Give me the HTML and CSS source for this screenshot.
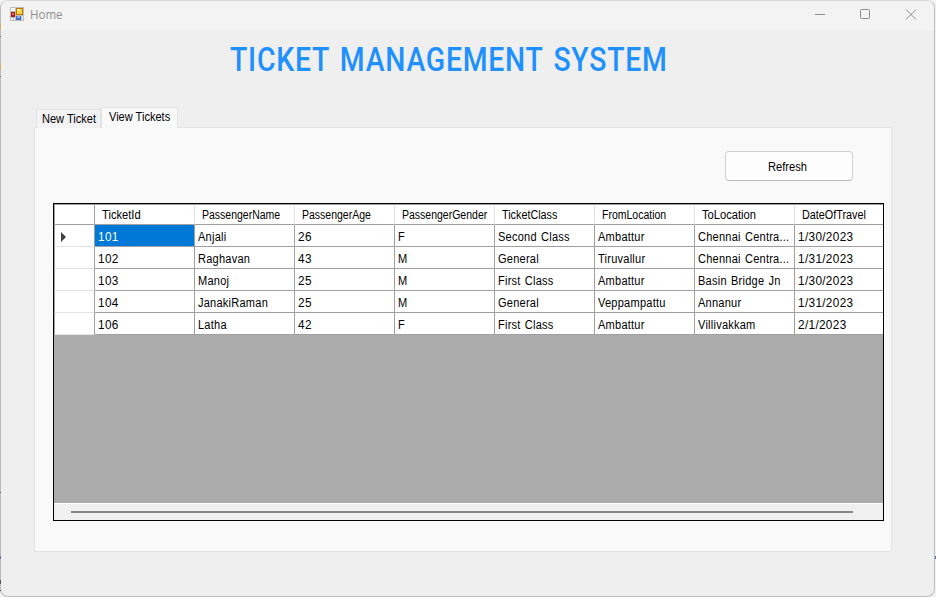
FILE: index.html
```html
<!DOCTYPE html>
<html lang="en">
<head>
<meta charset="utf-8">
<title>Home</title>
<link rel="stylesheet" href="styles.css">
</head>
<body>
<div class="window">
  <header class="titlebar">
    <svg class="app-icon" width="14" height="14" viewBox="0 0 14 14">
      <path fill="#bdbdbd" d="M0 0h14v14H0z"/><path fill="#f7f7f7" d="M1 1h4v3H1zM1 11h2v2H1zM4 11h1v2H4zM12 9h1v4h-1z"/>
      <path fill="#a91e13" d="M1 5h4v5H1z"/><path fill="#e56a55" d="M2 6h2v2H2z"/>
      <path fill="#b87b00" d="M6 1h7v7H6z"/><path fill="#ffd23c" d="M7 2h5v5H7z"/><path fill="#fff0a0" d="M7 2h3v2H7z"/>
      <path fill="#3b6fc9" d="M6 9h5v4H6z"/><path fill="#86b0f5" d="M7 9h3v2H7z"/>
    </svg>
    <span class="caption">Home</span>
    <svg class="controls" width="102" height="12" viewBox="0 0 102 12" fill="none" stroke="#8c8c8c">
      <path d="M0 5.5h10"/><rect x="45.500" y=".5" width="9" height="9" rx="1"/><path d="M91 .5l10 10M101 .5l-10 10"/>
    </svg>
  </header>
  <main>
    <h1><span>TICKET MANAGEMENT SYSTEM</span></h1>
    <nav class="tabs"><div class="tab"><span>New Ticket</span></div><div class="tab active"><span>View Tickets</span></div></nav>
    <section class="panel">
      <button><span>Refresh</span></button>
      <div class="data-grid">
        <div class="row head"><div></div><div><span>TicketId</span></div><div><span>PassengerName</span></div><div><span>PassengerAge</span></div><div><span>PassengerGender</span></div><div><span>TicketClass</span></div><div><span>FromLocation</span></div><div><span>ToLocation</span></div><div><span>DateOfTravel</span></div></div>
        <div class="row"><div><svg class="marker" width="5" height="10" viewBox="0 0 5 10"><path fill="#404040" d="M0 0l5 5-5 5z"/></svg></div><div class="selected num"><span>101</span></div><div><span>Anjali</span></div><div class="num"><span>26</span></div><div><span>F</span></div><div><span>Second Class</span></div><div><span>Ambattur</span></div><div><span>Chennai Centra...</span></div><div class="num"><span>1/30/2023</span></div></div>
        <div class="row"><div></div><div class="num"><span>102</span></div><div><span>Raghavan</span></div><div class="num"><span>43</span></div><div><span>M</span></div><div><span>General</span></div><div><span>Tiruvallur</span></div><div><span>Chennai Centra...</span></div><div class="num"><span>1/31/2023</span></div></div>
        <div class="row"><div></div><div class="num"><span>103</span></div><div><span>Manoj</span></div><div class="num"><span>25</span></div><div><span>M</span></div><div><span>First Class</span></div><div><span>Ambattur</span></div><div><span>Basin Bridge Jn</span></div><div class="num"><span>1/30/2023</span></div></div>
        <div class="row"><div></div><div class="num"><span>104</span></div><div><span>JanakiRaman</span></div><div class="num"><span>25</span></div><div><span>M</span></div><div><span>General</span></div><div><span>Veppampattu</span></div><div><span>Annanur</span></div><div class="num"><span>1/31/2023</span></div></div>
        <div class="row"><div></div><div class="num"><span>106</span></div><div><span>Latha</span></div><div class="num"><span>42</span></div><div><span>F</span></div><div><span>First Class</span></div><div><span>Ambattur</span></div><div><span>Villivakkam</span></div><div class="num"><span>2/1/2023</span></div></div>
        <div class="empty"></div>
        <div class="scrollbar"><div class="thumb"></div></div>
      </div>
    </section>
  </main>
</div>
</body>
</html>
```
FILE: styles.css
```css
* { box-sizing: border-box; }
body { margin: 0; background: #f3f3f3 linear-gradient(#5a6a9a, #5a6a9a) 934px 556px / 2px 3px no-repeat; font: 12px/14px "Liberation Sans", sans-serif; color: #000; overflow: hidden; }
/* slivers of the desktop along the left window edge */
body::before { content: ""; position: absolute; z-index: 2; left: 0; top: 0; width: 1px; height: 597px; background: linear-gradient(transparent 23px, #d0b070 23px 30px, transparent 30px 36px, #777 36px 37px, transparent 37px 63px, #d0b070 63px 70px, transparent 70px 76px, #777 76px 77px, transparent 77px 492px, #666 492px 493px, transparent 493px 556px, #66709c 556px 559px, transparent 559px 580px, #555 580px 584px, transparent 584px 590px, #555 590px 591px, transparent 591px); }
span { display: inline-block; white-space: nowrap; transform-origin: 0 50%; }
.window { width: 935px; height: 597px; background: #efefef; border: 1px solid #bcbcbc; border-top-color: #d9d9d9; border-radius: 8px; overflow: hidden; }
.titlebar { height: 29px; background: #f3f3f3; display: flex; padding: 6px 17px 0 9px; }
.caption { margin: 0 0 0 6px; font: 12px/16px "Open Sans", sans-serif; color: #8f8f8f; transform: scaleX(.96); }
.controls { margin: 2px 0 0 auto; }
h1 { margin: 0; height: 77px; padding: 10px 0 0 229px; font: 500 33px/40px Roboto, sans-serif; color: #1e90ff; }
h1 span { transform: scaleX(.86); letter-spacing: .9px; word-spacing: 3px; }
.tabs { display: flex; align-items: flex-end; height: 21px; padding-left: 35px; position: relative; z-index: 1; }
.tab { width: 65px; height: 19px; border: 1px solid #e3e3e3; border-bottom: 0; background: #f3f3f3; padding: 2px 0 0 5px; }
.tab span { transform: scaleX(.92); }
.tab.active { width: 77px; height: 21px; background: #f9f9f9; padding: 2px 0 0 7px; }
.panel { width: 858px; height: 425px; margin: -1px 0 0 33px; border: 1px solid #e3e3e3; background: #f9f9f9; padding: 23px 7px 0 18px; display: flex; flex-direction: column; }
button { width: 128px; height: 30px; margin: 0 31px 0 auto; border: 1px solid #d0d0d0; border-bottom-color: #bbb; border-radius: 4px; background: #fdfdfd; font: inherit; padding: 1px 0 0 0; }
button span { transform: scaleX(.93); }
.data-grid { width: 831px; height: 318px; margin-top: 22px; border: 1px solid #000; background: #ababab; display: flex; flex-direction: column; overflow: hidden; }
.row { display: grid; grid-template-columns: 41px repeat(7, 100px) 88px; height: 22px; flex: none; }
.row > div { background: #fff; border-right: 1px solid #a0a0a0; border-bottom: 1px solid #a0a0a0; padding: 5px 0 0 3px; }
.row > div:first-child { border-left: 1px solid #a0a0a0; border-bottom-color: #e3e3e3; padding: 7px 0 0 6px; }
.row > div:last-child { border-right: 0; }
.row span { transform: scaleX(.92); letter-spacing: .25px; word-spacing: 1px; }
.row .num span { transform: scaleX(.98); letter-spacing: .35px; }
.row.head { height: 21px; border-top: 1px solid #a0a0a0; }
.row.head > div { padding: 3px 0 0 7px; border-right-color: #e3e3e3; }
.row.head > div:first-child { border-bottom-color: #a0a0a0; border-right-color: #a0a0a0; }
.row.head span { transform: scaleX(.875); letter-spacing: 0; }
.row.head > :nth-child(2) span, .row.head > :nth-child(8) span { transform: scaleX(.93); }
.row.head > :nth-child(6) span, .row.head > :nth-child(9) span { transform: scaleX(.9); }
.row > .selected { background: #0078d7; color: #fff; }
.marker { display: block; }
.empty { flex: 1; }
.scrollbar { height: 17px; border-top: 1px solid #fff; background: #f0f0f0; padding: 7px 30px 0 17px; }
.thumb { height: 2px; background: #858585; }
```
